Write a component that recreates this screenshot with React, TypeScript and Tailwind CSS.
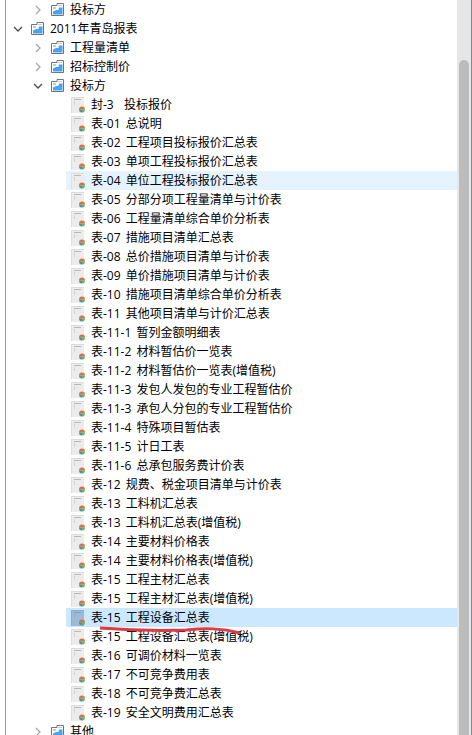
const files = [
  "封-3  投标报价","表-01 总说明","表-02 工程项目投标报价汇总表","表-03 单项工程投标报价汇总表","表-04 单位工程投标报价汇总表",
  "表-05 分部分项工程量清单与计价表","表-06 工程量清单综合单价分析表","表-07 措施项目清单汇总表","表-08 总价措施项目清单与计价表",
  "表-09 单价措施项目清单与计价表","表-10 措施项目清单综合单价分析表","表-11 其他项目清单与计价汇总表","表-11-1 暂列金额明细表",
  "表-11-2 材料暂估价一览表","表-11-2 材料暂估价一览表(增值税)","表-11-3 发包人发包的专业工程暂估价","表-11-3 承包人分包的专业工程暂估价",
  "表-11-4 特殊项目暂估表","表-11-5 计日工表","表-11-6 总承包服务费计价表","表-12 规费、税金项目清单与计价表","表-13 工料机汇总表",
  "表-13 工料机汇总表(增值税)","表-14 主要材料价格表","表-14 主要材料价格表(增值税)","表-15 工程主材汇总表","表-15 工程主材汇总表(增值税)",
  "表-15 工程设备汇总表","表-15 工程设备汇总表(增值税)","表-16 可调价材料一览表","表-17 不可竞争费用表","表-18 不可竞争费汇总表","表-19 安全文明费用汇总表",
];

function Folder() {
  return (
    <svg width="15" height="15" viewBox="0 0 15 15" className="shrink-0">
      <path d="M1.5 3.5H7V1.5H13.5V13.5H1.5Z" fill="#fff" stroke="#70757c" strokeWidth="1" />
      <rect x="3" y="5" width="3" height="2" fill="#a9d3f5" />
      <rect x="8" y="3" width="4" height="1" fill="#c9c9c9" />
      <path d="M3 12.5V9.5L6 8H8.5L9 5.5H12.5V12.5Z" fill="#4aa3ee" />
    </svg>
  );
}

function FileIcon({ selected }: { selected?: boolean }) {
  return (
    <svg width="15" height="16" viewBox="0 0 15 16" className="shrink-0">
      <rect x="0" y="0" width="13" height="16" fill={selected ? "#9dbbd8" : "#ececec"} />
      <rect x="0" y="0" width="13" height="1" fill={selected ? "#8eaecd" : "#dcdcdc"} />
      <rect x="0" y="0" width="1" height="16" fill={selected ? "#8eaecd" : "#dedede"} />
      <rect x="3" y="2" width="7" height="1" fill={selected ? "#7f9fbe" : "#b9b9b9"} />
      <rect x="3" y="4" width="1" height="4" fill={selected ? "#8eaecd" : "#d2d2d2"} />
      <path d="M8 12.5A3 3 0 0 1 14 12.5Z" fill="#e2703c" />
      <path d="M8 12.5H11V15.5A3 3 0 0 1 8 12.5Z" fill="#3f8fd8" />
      <path d="M11 12.5H14A3 3 0 0 1 11 15.5Z" fill="#62b85c" />
    </svg>
  );
}

function Chevron({ open }: { open?: boolean }) {
  return (
    <svg width="10" height="10" viewBox="0 0 10 10" className="shrink-0">
      {open ? (
        <path d="M1 3L5 7L9 3" fill="none" stroke="#4b4b4b" strokeWidth="1.3" />
      ) : (
        <path d="M3 1L7 5L3 9" fill="none" stroke="#a8a8a8" strokeWidth="1.3" />
      )}
    </svg>
  );
}

function FolderRow({ label, open, indent }: { label: string; open?: boolean; indent: string }) {
  return (
    <div className={`h-[19px] flex items-center ${indent}`}>
      <Chevron open={open} />
      <div className="ml-[7px]"><Folder /></div>
      <span className="ml-[5px] whitespace-pre">{label}</span>
    </div>
  );
}

export default function App() {
  return (
    <div
      className="w-[472px] h-[735px] overflow-hidden bg-white flex text-[12px] leading-[19px] text-black [word-spacing:2px]"
      style={{ fontFamily: '"Open Sans", "Noto Sans CJK SC", sans-serif' }}
    >
      <div className="w-[6px] shrink-0 bg-white border-r border-[#9a9a9a]" />
      <div className="relative flex-1 min-w-0">
        <FolderRow label="投标方" indent="pl-[27px]" />
        <FolderRow label="2011年青岛报表" open indent="pl-[7px]" />
        <FolderRow label="工程量清单" indent="pl-[27px]" />
        <FolderRow label="招标控制价" indent="pl-[27px]" />
        <FolderRow label="投标方" open indent="pl-[27px]" />
        {files.map((f, i) => (
          <div
            key={i}
            className={`h-[19px] ml-[60px] flex items-center pl-[5px] ${i === 4 ? "bg-[#e5f3ff]" : i === 27 ? "bg-[#cce8ff]" : ""}`}
          >
            <FileIcon selected={i === 27} />
            <span className="ml-[5px] whitespace-pre">{f}</span>
          </div>
        ))}
        <FolderRow label="其他" indent="pl-[27px]" />
        <svg className="absolute left-[90px] top-[623px]" width="150" height="14" viewBox="0 0 150 14">
          <path d="M4 5C30 7 60 8 90 7C110 5 125 5 144 10" fill="none" stroke="#e23a44" strokeWidth="3" />
        </svg>
      </div>
      <div className="w-[14px] shrink-0 bg-[#e6e6e6] flex flex-col items-center pt-[60px]">
        <div className="w-[10px] flex-1 bg-[#bcbcbc] rounded-t-[5px]" />
      </div>
      <div className="w-[1px] shrink-0 bg-[#85858f]" />
    </div>
  );
}
